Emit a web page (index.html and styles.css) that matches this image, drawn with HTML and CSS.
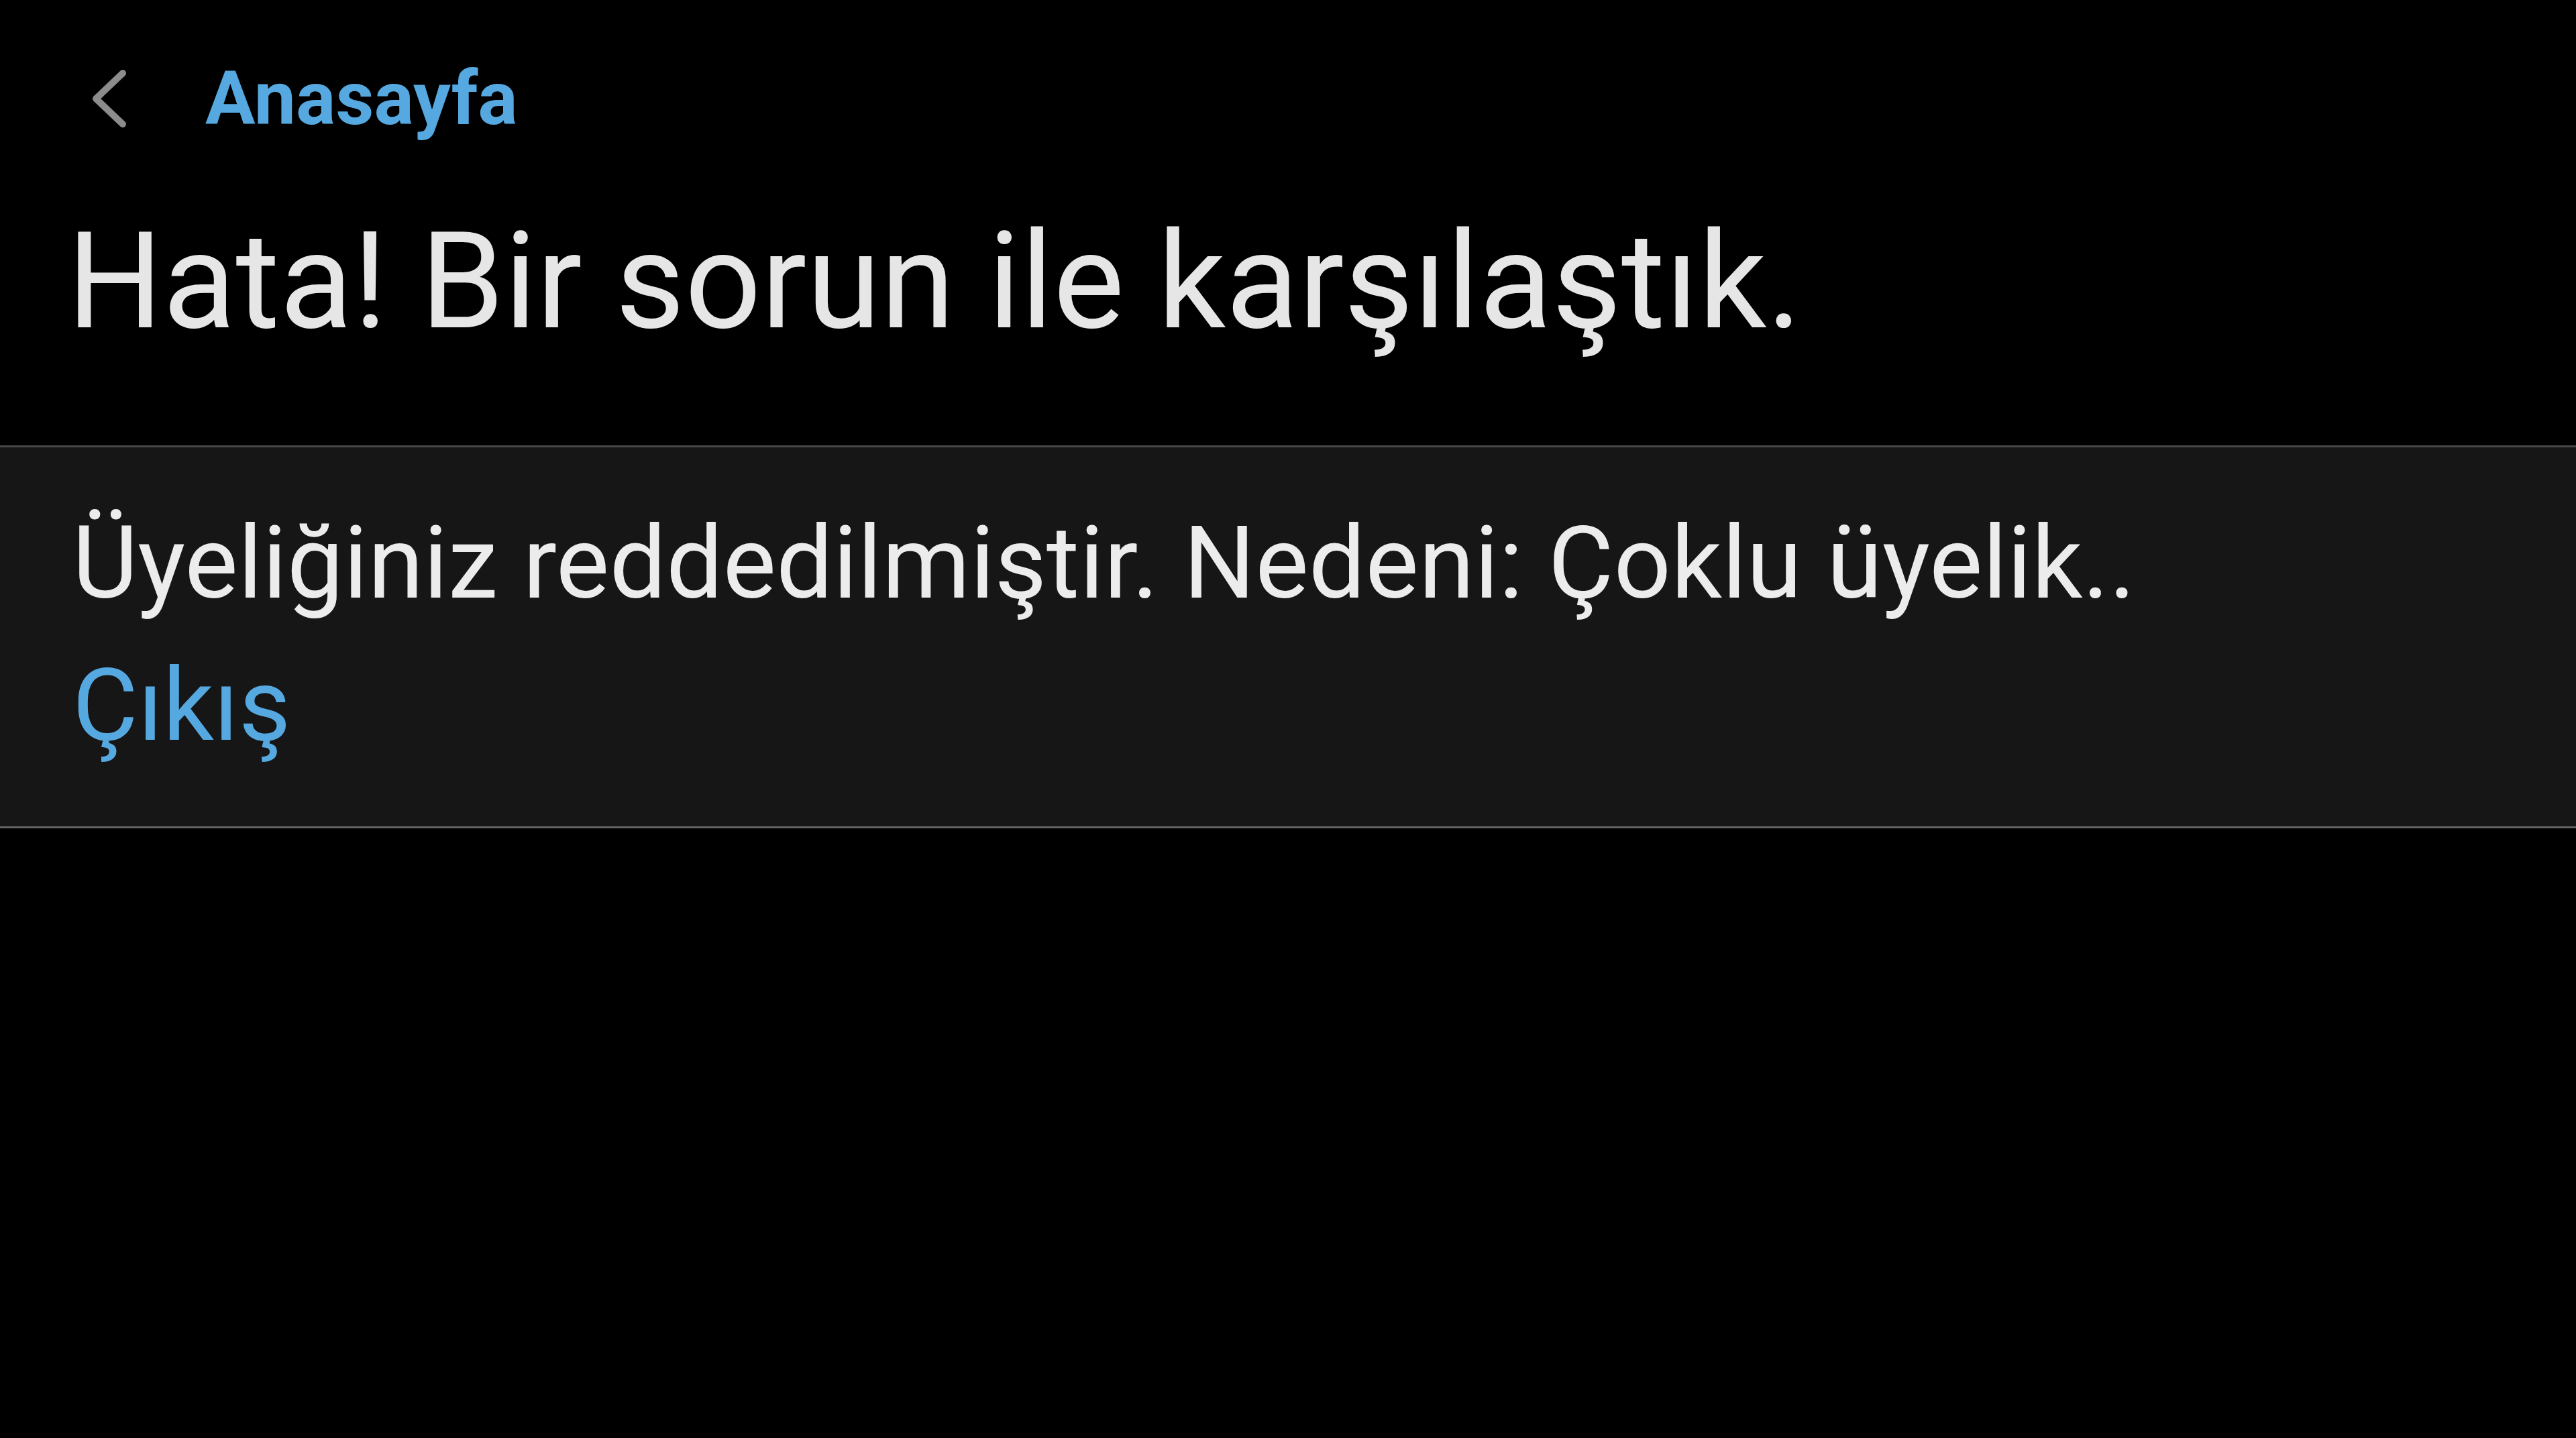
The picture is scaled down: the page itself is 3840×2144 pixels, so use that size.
FILE: index.html
```html
<!DOCTYPE html>
<html lang="tr">
<head>
  <meta charset="UTF-8">
  <meta name="viewport" content="width=device-width, initial-scale=1">
  <title>Hata</title>
  <link rel="stylesheet" href="styles.css">
</head>
<body>
  <header class="topbar">
    <a class="back" href="#">
      <svg class="back-icon" viewBox="0 0 56 96" width="56" height="96">
        <path d="M48 10 L8 48 L48 86" fill="none" stroke="#8c8c8c" stroke-width="10" stroke-linecap="round" stroke-linejoin="round"/>
      </svg>
    </a>
    <a class="home-link" href="#">Anasayfa</a>
  </header>

  <h1 class="page-title">Hata! Bir sorun ile karşılaştık.</h1>

  <div class="message-box">
    <p class="message">Üyeliğiniz reddedilmiştir. Nedeni: Çoklu üyelik..</p>
    <a class="logout" href="#">Çıkış</a>
  </div>
</body>
</html>
```

FILE: styles.css
```css
  body {
    margin: 0;
    padding: 0;
    background: #000;
    color: #e8e8e8;
    font-family: Roboto, "Noto Sans", sans-serif;
    min-height: 100vh;
  }

  .topbar {
    display: flex;
    align-items: center;
    height: 294px;
    padding-left: 135px;
  }

  .back {
    display: flex;
    align-items: center;
  }

  .back-icon {
    display: block;
  }

  .home-link {
    margin-left: 115px;
    color: #55a9e0;
    font-weight: bold;
    font-size: 111px;
    text-decoration: none;
  }

  .page-title {
    margin: 26px 0 0 0;
    padding-left: 100px;
    font-weight: normal;
    font-size: 200px;
    line-height: 1;
    color: #e6e6e6;
  }

  .message-box {
    margin-top: 144px;
    background: #161616;
    border-top: 3px solid #484848;
    border-bottom: 3px solid #626260;
    padding: 67px 108px 74px 108px;
    font-size: 150px;
    line-height: 212px;
  }

  .message {
    margin: 0;
    color: #ececec;
  }

  .logout {
    display: block;
    width: max-content;
    color: #55a9e0;
    text-decoration: none;
  }
```
